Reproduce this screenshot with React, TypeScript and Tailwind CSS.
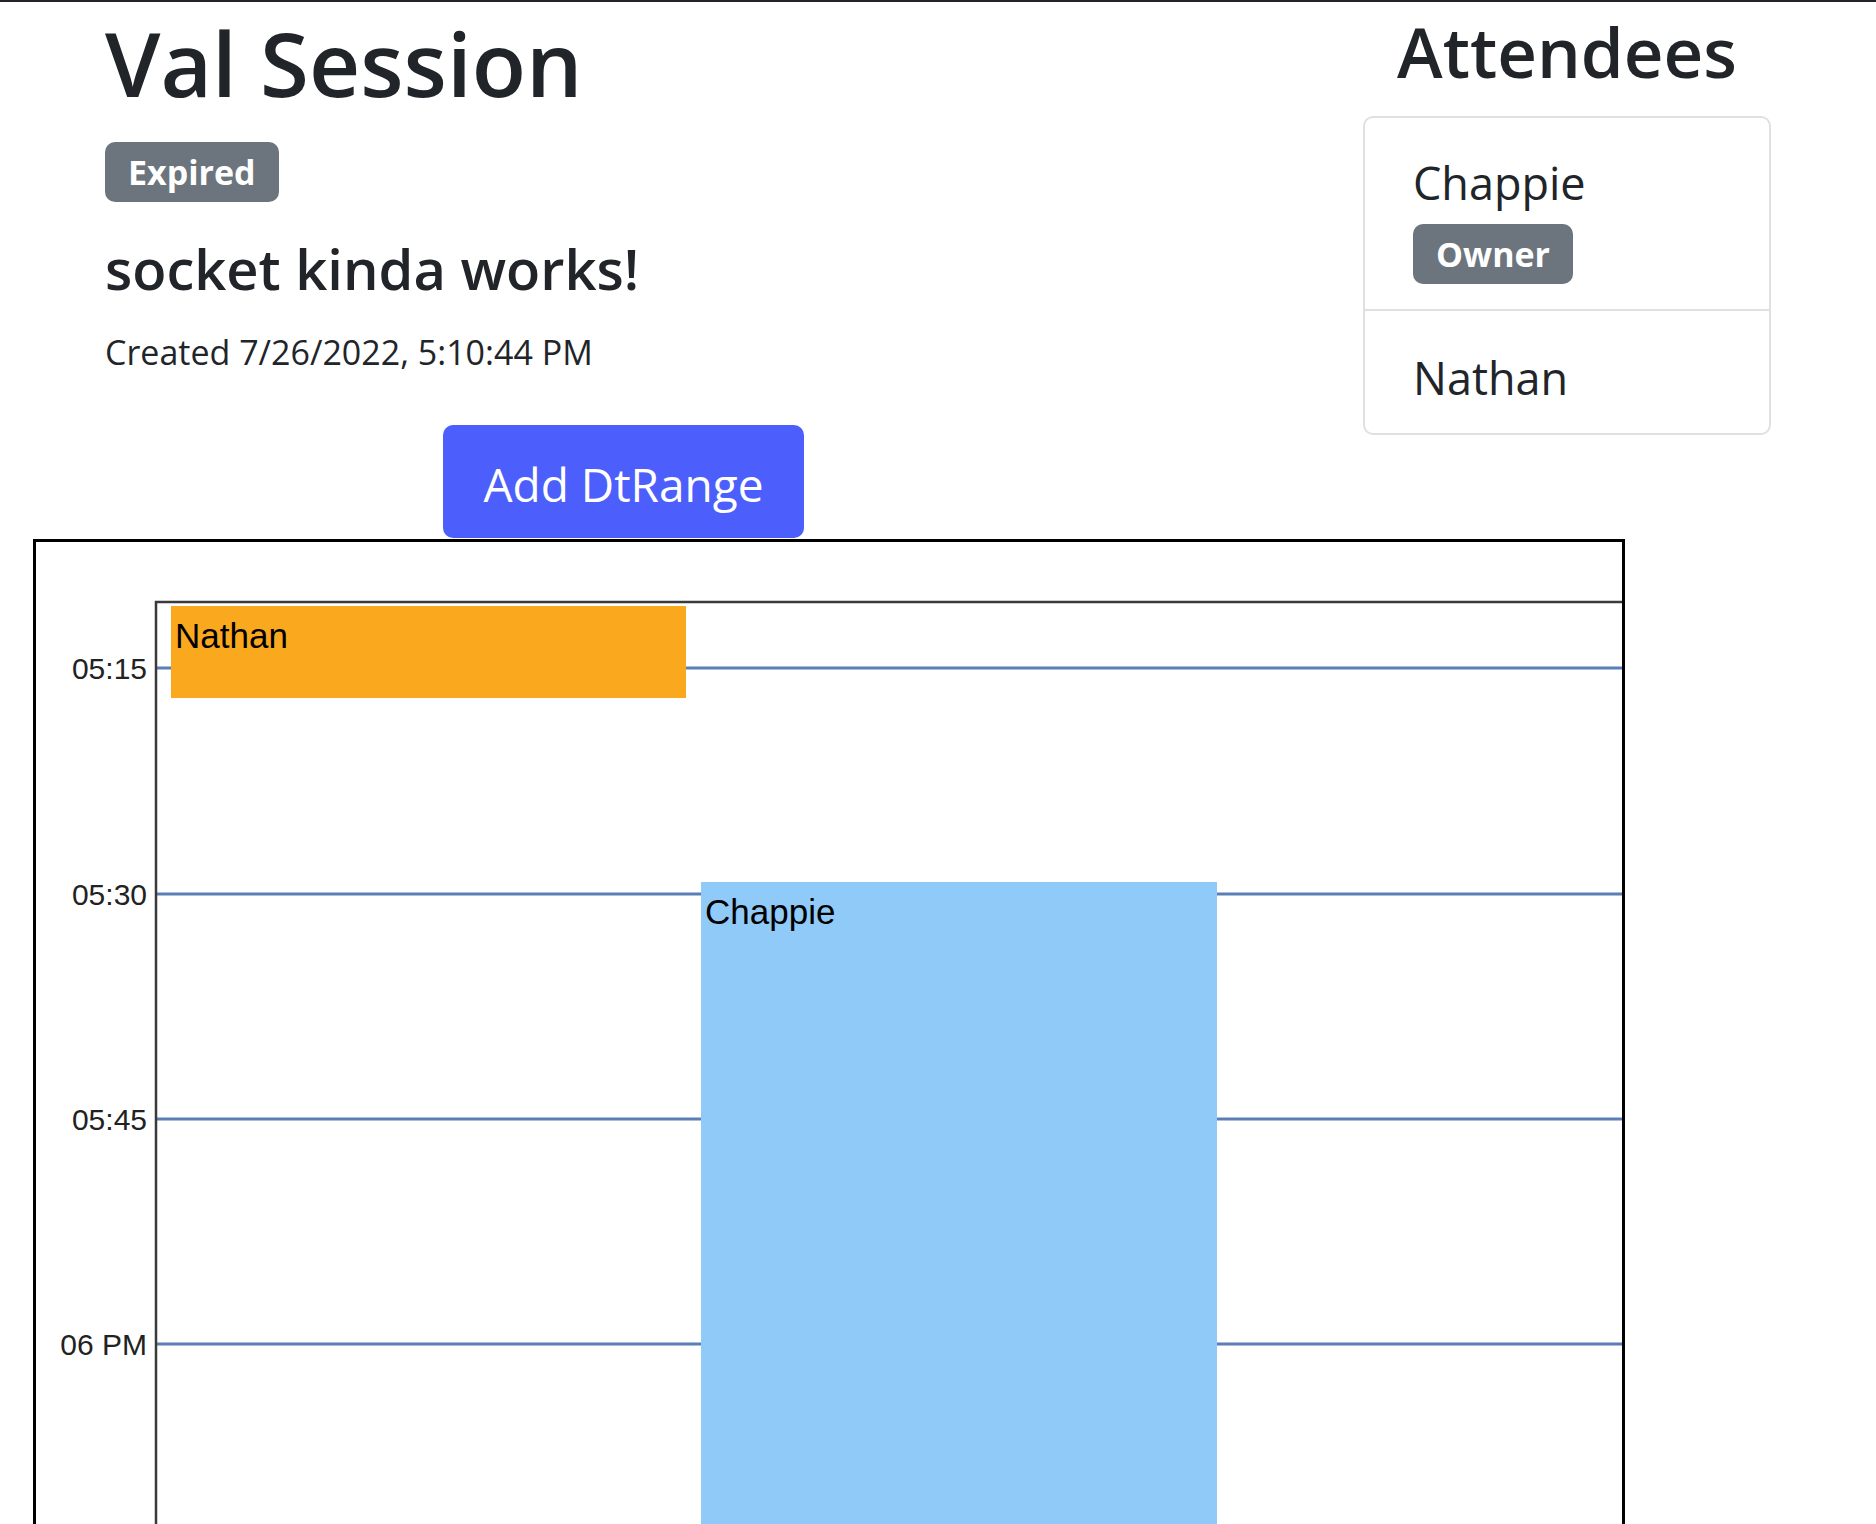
import React from 'react';

const sans = "font-['Open_Sans','Noto_Sans',sans-serif]";

const attendees = [
    { id: 1, name: 'Chappie', owner: true },
    { id: 2, name: 'Nathan', owner: false },
];

// chart scale: 15 minutes -> 225.3px, first tick at y=126
const ticks = [
    { label: '05:15', y: 126 },
    { label: '05:30', y: 352 },
    { label: '05:45', y: 577 },
    { label: '06 PM', y: 802 },
];

const ranges = [
    { id: 'n', name: 'Nathan', x: 135, y: 64, w: 515, h: 92, fill: '#faa81e' },
    { id: 'c', name: 'Chappie', x: 665, y: 340, w: 516, h: 900, fill: '#90caf9' },
];

function Badge({ children }: { children: React.ReactNode }) {
    return (
        <span className="inline-block rounded-[10px] bg-[#6c757d] px-[23px] py-[13px] text-[34px] font-bold leading-none text-white">
            {children}
        </span>
    );
}

function Timeline() {
    return (
        <div className="ml-[33px] mt-[1px] h-[1100px] w-[1592px] border-[3px] border-black bg-white">
            <svg width="1586" height="1094" className="block">
                {ticks.map((t) => (
                    <g key={t.label}>
                        <line x1={120} x2={1586} y1={t.y} y2={t.y} stroke="#5a7fb6" strokeWidth={3} />
                        <text
                            x={111}
                            y={t.y + 11}
                            textAnchor="end"
                            fontSize={30}
                            fill="#222"
                            fontFamily="'Liberation Sans', Arial, sans-serif"
                        >
                            {t.label}
                        </text>
                    </g>
                ))}
                <path d="M120 1094 V60 H1586" fill="none" stroke="#3a3a3a" strokeWidth={2.5} />
                {ranges.map((r) => (
                    <g key={r.id}>
                        <rect x={r.x} y={r.y} width={r.w} height={r.h} fill={r.fill} />
                        <text
                            x={r.x + 4}
                            y={r.y + 42}
                            fontSize={35}
                            fill="#000"
                            fontFamily="'Liberation Sans', Arial, sans-serif"
                        >
                            {r.name}
                        </text>
                    </g>
                ))}
            </svg>
        </div>
    );
}

export default function App() {
    return (
        <div className={`min-h-screen overflow-hidden border-t-2 border-[#212529] bg-white text-[#212529] ${sans}`}>
            <div className="flex items-start justify-between px-[105px]">
                <div className="flex flex-col items-start">
                    <h1 className="mt-[6px] text-[89px] font-semibold leading-[110px]">Val Session</h1>
                    <div className="mt-[24px]">
                        <Badge>Expired</Badge>
                    </div>
                    <h4 className="mt-[32px] text-[56px] font-semibold leading-[68px]">socket kinda works!</h4>
                    <p className="mt-[25px] text-[34px] leading-[51px]">Created 7/26/2022, 5:10:44 PM</p>
                    <button className="ml-[338px] mt-[47px] flex h-[113px] w-[361px] items-center justify-center rounded-[10px] bg-[#4c5ffc] pt-[6px] text-[46px] text-white">
                        Add DtRange
                    </button>
                </div>

                <div className="flex w-[408px] flex-col items-center">
                    <h2 className="mt-[7px] text-[69px] font-semibold leading-[85px]">Attendees</h2>
                    <ul className="mt-[22px] w-full rounded-[10px] border-2 border-[#e0e0e0]">
                        {attendees.map((a) => (
                            <li
                                key={a.id}
                                className={
                                    a.owner
                                        ? 'border-b-2 border-[#e0e0e0] px-[48px] pb-[25px] pt-[31px]'
                                        : 'px-[48px] pb-[22px] pt-[33px]'
                                }
                            >
                                <div className="text-[45px] leading-[67px]">{a.name}</div>
                                {a.owner && (
                                    <div className="mt-[8px]">
                                        <Badge>Owner</Badge>
                                    </div>
                                )}
                            </li>
                        ))}
                    </ul>
                </div>
            </div>

            <Timeline />
        </div>
    );
}
